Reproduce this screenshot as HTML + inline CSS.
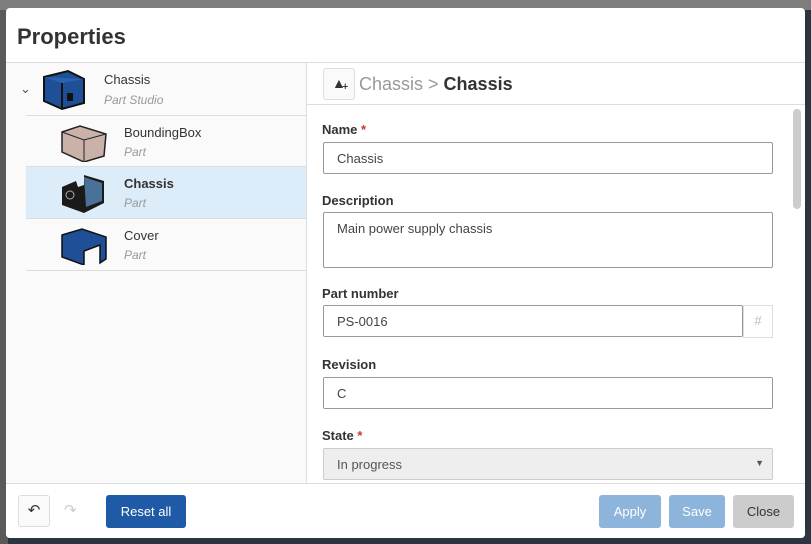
<!DOCTYPE html>
<html><head><style>
*{box-sizing:border-box;margin:0;padding:0}
body{width:811px;height:544px;overflow:hidden;background:#2c3440;font-family:"Liberation Sans",sans-serif;position:relative}
.top{position:absolute;left:0;top:0;width:811px;height:10px;background:#7d7d7d}
.left{position:absolute;left:0;top:10px;width:8px;height:534px;background:#5a5a5a}
.modal{position:absolute;left:6px;top:8px;width:799px;height:530px;background:#fff;border-radius:4px;overflow:hidden}
h1{position:absolute;left:11px;top:16px;font-size:22px;font-weight:bold;color:#333}
.lp{position:absolute;left:0;top:54px;width:301px;height:421px;background:#fafafa;border-top:1px solid #ddd;border-right:1px solid #ddd}
.rp{position:absolute;left:301px;top:54px;width:498px;height:421px;border-top:1px solid #ddd}
.row{position:absolute;left:20px;width:280px;height:52px;border-bottom:1px solid #ddd}
.row .n{position:absolute;left:98px;top:9px;font-size:13px;color:#333}
.row .s{position:absolute;left:98px;top:29px;font-size:12px;font-style:italic;color:#999}
.crumb{position:absolute;left:0;top:0;width:498px;height:42px;border-bottom:1px solid #ddd}
.ib{position:absolute;left:16px;top:5px;width:32px;height:32px;border:1px solid #ddd;border-radius:3px;background:#fafafa}
.lab{position:absolute;left:15px;font-size:13px;font-weight:bold;color:#333}
.in{position:absolute;left:16px;width:450px;height:32px;border:1px solid #999;border-radius:2px;font-size:13px;color:#444;padding:8px 13px}
.foot{position:absolute;left:0;top:475px;width:799px;height:55px;border-top:1px solid #ddd;background:#fff}
.btn{position:absolute;top:11px;height:33px;border-radius:3px;font-size:13px;color:#fff;text-align:center;line-height:33px}
</style></head><body>
<div class="top"></div><div class="left"></div>
<div class="modal">
<h1>Properties</h1>
<div class="lp">
 <div style="position:absolute;left:14px;top:18px;font-size:13px;color:#555">&#8964;</div>
 <svg style="position:absolute;left:34px;top:6px" width="48" height="42"><polygon points="4,8 28,2 44,10 44,34 22,40 4,32" fill="#1f4f96" stroke="#111" stroke-width="2"/><polygon points="4,8 22,14 44,10" fill="#2a63b4"/><line x1="22" y1="14" x2="22" y2="40" stroke="#111" stroke-width="2"/><rect x="27" y="24" width="6" height="8" fill="#111"/></svg>
 <div style="position:absolute;left:98px;top:9px;font-size:13px;color:#333">Chassis</div>
 <div style="position:absolute;left:98px;top:30px;font-size:12px;font-style:italic;color:#999">Part Studio</div>
 <div class="row" style="top:52px;border-top:1px solid #ddd">
  <svg style="position:absolute;left:34px;top:6px" width="48" height="40"><polygon points="2,10 20,4 46,12 44,34 24,40 2,30" fill="#cbb2a8" stroke="#222" stroke-width="1.5"/><polyline points="2,10 24,18 46,12" fill="none" stroke="#222"/><line x1="24" y1="18" x2="24" y2="40" stroke="#222"/></svg>
  <div class="n">BoundingBox</div><div class="s">Part</div></div>
 <div class="row" style="top:104px;background:#dcecf8">
  <svg style="position:absolute;left:34px;top:6px" width="48" height="40"><polygon points="2,14 16,8 18,14 24,12 24,2 44,8 44,30 24,40 2,32" fill="#1a1a1a"/><polygon points="24,4 42,10 42,28 26,34" fill="#4a7299"/><circle cx="10" cy="22" r="4" fill="none" stroke="#aaa"/></svg>
  <div class="n" style="font-weight:bold">Chassis</div><div class="s">Part</div></div>
 <div class="row" style="top:156px">
  <svg style="position:absolute;left:34px;top:6px" width="48" height="40"><polygon points="2,10 22,4 46,12 46,34 40,38 40,20 24,26 24,40 2,32" fill="#1f4f96" stroke="#111" stroke-width="1.5"/></svg>
  <div class="n">Cover</div><div class="s">Part</div></div>
</div>
<div class="rp">
 <div class="crumb"><div class="ib"><span style="position:absolute;left:8px;top:6px;font-size:14px;color:#333">&#9650;</span><span style="position:absolute;left:18px;top:12px;font-size:11px">+</span></div>
 <div style="position:absolute;left:52px;top:11px;font-size:18px;color:#999">Chassis &gt; <b style="color:#333">Chassis</b></div></div>
 <div style="position:absolute;right:4px;top:46px;width:8px;height:100px;background:#ccc;border-radius:4px"></div>
 <div class="lab" style="top:59px">Name <span style="color:#c33">*</span></div>
 <div class="in" style="top:79px">Chassis</div>
 <div class="lab" style="top:130px">Description</div>
 <div class="in" style="top:149px;height:56px">Main power supply chassis</div>
 <div class="lab" style="top:223px">Part number</div>
 <div class="in" style="top:242px;width:420px">PS-0016</div>
 <div style="position:absolute;left:436px;top:242px;width:30px;height:33px;border:1px solid #ddd;color:#bbb;font-size:13px;text-align:center;line-height:30px">#</div>
 <div class="lab" style="top:294px">Revision</div>
 <div class="in" style="top:314px">C</div>
 <div class="lab" style="top:365px">State <span style="color:#c33">*</span></div>
 <div class="in" style="top:385px;background:#eee;border-color:#ccc;color:#555">In progress<span style="position:absolute;right:8px;top:9px;font-size:9px">&#9660;</span></div>
</div>
<div class="foot">
 <div style="position:absolute;left:12px;top:11px;width:32px;height:32px;border:1px solid #ddd;border-radius:3px;background:#fafafa;text-align:center;line-height:30px;font-size:15px;color:#333">&#8630;</div>
 <div style="position:absolute;left:58px;top:17px;font-size:15px;color:#ccc">&#8631;</div>
 <div class="btn" style="left:100px;width:80px;background:#1f5aa6">Reset all</div>
 <div class="btn" style="left:593px;width:62px;background:#8db4db">Apply</div>
 <div class="btn" style="left:663px;width:56px;background:#8db4db">Save</div>
 <div class="btn" style="left:727px;width:61px;background:#ccc;color:#333">Close</div>
</div>
</div>
</body></html>
